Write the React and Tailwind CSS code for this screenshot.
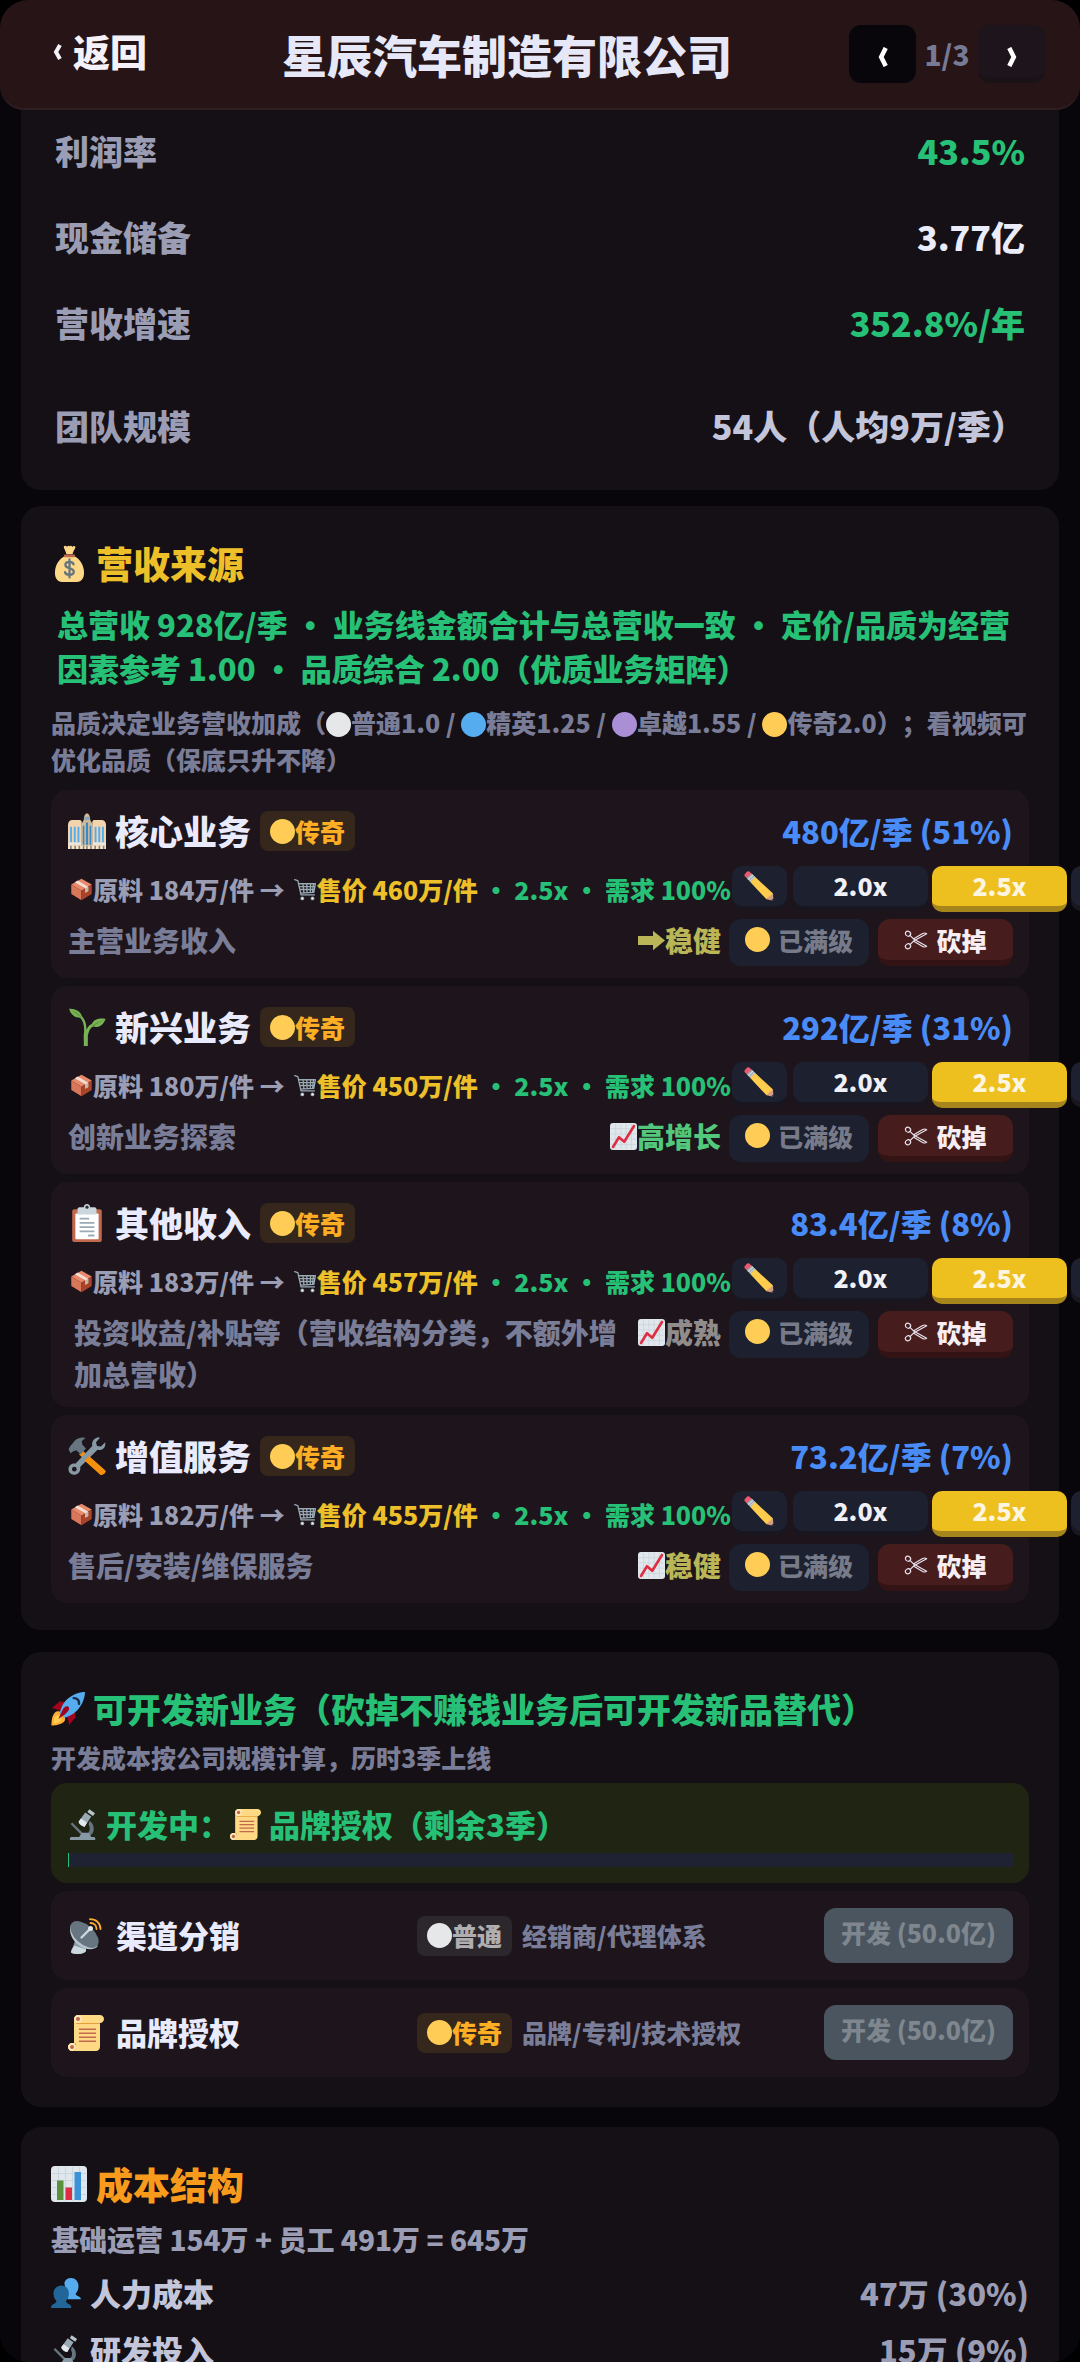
import React from 'react';
import clsx from 'clsx';

// Every icon is drawn on a 36x36 grid
function Icon({ className, children }) {
  return (
    <svg viewBox="0 0 36 36" className={clsx('inline-block shrink-0', className)} aria-hidden="true">
      {children}
    </svg>
  );
}

const MoneyBag = ({ className }) => (
  <Icon className={className}>
    <path fill="#FDD888" d="M31.9 23.8c-.9-5.300-3.900-9.800-8.300-12.400-1.400-.8-2.600-.4-3.500-1.200h-4.200c-.9.8-2.100.4-3.500 1.200-4.400 2.600-7.400 7.100-8.300 12.400-1.100 6.500 1.100 12.200 6.900 12.200h14c5.800 0 8-5.700 6.900-12.200z" />
    <path fill="#FDD888" d="M12.500 1.500c1-1.400 2.200-.3 3 .1 1-.9 1.900-1.400 2.700-.4.9-1 1.800-.5 2.500.4 1-.6 2.400-1.200 3 0 .5 1.300-2.200 4.100-2.700 7.400h-6c-.5-3.300-3-6.200-2.500-7.500z" />
    <path fill="#BF6952" d="M23.500 10.500c0 .8-.6 1.300-1.300 1.300h-8.400c-.7 0-1.300-.5-1.300-1.300s.6-1.300 1.300-1.300h8.400c.7 0 1.300.500 1.300 1.300z" />
    <path fill="none" stroke="#67757F" strokeWidth="2.200" strokeLinecap="round" d="M22 18.800c-.5-1.500-2-2.300-4-2.300-2.300 0-4 1.100-4 3 0 4.300 8.200 2 8.200 6.300 0 2-1.800 3.200-4.200 3.200-2.300 0-4-.9-4.400-2.600M18 14v17.500" />
  </Icon>
);

const Building = ({ className }) => (
  <Icon className={className}>
    <path fill="#F2D5AE" d="M0 12c0-3 2-4.500 4-4.500h7c1.500 0 2 1 2 2V35H0zM23 9.500c0-1 .5-2 2-2h7c2 0 4 1.500 4 4.500v23H23z" />
    <path fill="#CDBB9C" d="M12.500 12c.5-2 2-3 2.500-5 .3-3 1-5.500 3-5.500s2.700 2.500 3 5.500c.5 2 2 3 2.500 5v23h-11z" />
    <path fill="#8EA3B0" d="M15.500 4.500h5v3h-5z" />
    <path fill="#55ACEE" d="M2 14h1.800v15H2zM5.500 14h1.800v15H5.500zM9 14h1.800v15H9zM25.200 14H27v15h-1.800zM28.700 14h1.800v15h-1.800zM32.200 14H34v15h-1.800z" />
    <path fill="#3B88C3" d="M14 13h1.500v18H14zM17 10h2v21h-2zM20.500 13H22v18h-1.500z" />
    <path fill="#E6E7E8" d="M0 29h12.500v2H0zM23.500 29H36v2H23.500z" />
    <path fill="#F5E6CC" d="M0 32h36v3H0z" />
    <path fill="#8A7F77" d="M2 32h1.500v3H2zM6 32h1.500v3H6zM10 32h1.500v3H10zM14 32h1.500v3H14zM17.200 32h1.500v3h-1.500zM21 32h1.500v3H21zM25 32h1.500v3H25zM29 32h1.500v3H29zM33 32h1.500v3H33z" />
  </Icon>
);

const Seedling = ({ className }) => (
  <Icon className={className}>
    <path fill="#77B255" d="M22.500 15.200c-1.900.8-3.800 2.800-5 5.300.2-5-1.300-9.600-4.300-12.700C12 3 6 .3 1.200.8c.2 1.500.8 3 1.800 4.100C5.300 8 8 9.300 11.500 9.200c3.200 3.500 4.500 8.600 3.400 16.400L15 36h3.800V26c.8-3.900 2.500-7.300 5-8.400 4.800 1.600 9.400-1 11.900-7.200-5.700-1.200-11.200.3-13.200 4.800z" />
    <path fill="#5C913B" d="M2.500 1.800c4 1.300 7.500 3.200 9.900 6.300l-.6.7C9 6 6 4 2.500 1.800zM34 11.500c-4 1-7.500 2.500-10.500 5l.4.900c3-2.500 6.500-4.400 10.100-5.900z" />
  </Icon>
);

const Clipboard = ({ className }) => (
  <Icon className={className}>
    <path fill="#C1694F" d="M32 34c0 1.100-.9 2-2 2H6c-1.100 0-2-.9-2-2V7c0-1.100.9-2 2-2h24c1.100 0 2 .9 2 2z" />
    <path fill="#FFF" d="M29 32.500c0 .6-.4 1-1 1H8c-.6 0-1-.4-1-1V10c0-.6.400-1 1-1h20c.6 0 1 .400 1 1z" />
    <path fill="#CCD6DD" d="M25 3h-4c0-1.700-1.300-3-3-3s-3 1.300-3 3h-4c-1.100 0-2 .9-2 2v5h18V5c0-1.100-.9-2-2-2z" />
    <circle cx="18" cy="3" r="1.500" fill="#292F33" />
    <path fill="#99AAB5" d="M11 13h9v1.800h-9zM11 17h14v1.800H11zM11 21h14v1.800H11zM11 25h14v1.800H11zM19 29h6v1.800h-6z" />
  </Icon>
);

const Tools = ({ className }) => (
  <Icon className={className}>
    <path fill="#F4900C" d="M14 13l21 18.500c1.500 2-.9 4.500-4 4.500L10.500 16.500z" />
    <path fill="#66757F" d="M.5 11.500l2-3.500C5 6.500 5 3.500 9.500 1.500c2.500-1 5.500-1.500 7-.5L13 4l.5 3 3.500 4-5 5.500-4-4-3 1-2.500 2z" />
    <path fill="#8899A6" d="M28 12l-16.500 16.500c.8 3.500-1.500 7-5 7.300C3 36 0 33.500.5 29.800c.4-3 3.500-5 6.500-4.500L23 8.500c-1-3.500 1.500-7.500 5.500-8.300l1.800.5L26.500 5l1 3.500 3.700.5 4-4c1 4.500-2.500 8.300-7.200 7z" />
    <path fill="#F4900C" d="M20 18.300L35 31.500c1.500 2-.9 4.500-4 4.500L15.500 22.300z" />
    <circle cx="6" cy="30.500" r="2.200" fill="#1d151b" />
  </Icon>
);

const Parcel = ({ className }) => (
  <Icon className={className}>
    <path fill="#E8896A" d="M2 10L18 1l16 9-16 10z" />
    <path fill="#D9775A" d="M2 10l16 10v15L2 25z" />
    <path fill="#A8442A" d="M34 10L18 20v15l16-10z" />
    <path fill="#F2DDD5" d="M7.500 6.500L12 4l16.500 9.500v7l-4.500 2.500v-7z" />
    <path fill="#C9B4B0" d="M24 16l4.500-2.500v7L24 23z" />
  </Icon>
);

const Cart = ({ className }) => (
  <Icon className={className}>
    <path fill="none" stroke="#99AAB5" strokeWidth="2" strokeLinecap="round" strokeLinejoin="round" d="M1 2.500l5 1.500 5 22.500h21M7.500 9h26l-2.500 13.500-20.500 1M8.500 13.500h24.300M9.500 18h22.300M14 9l1.500 14M20 9l.5 14M26 9l-.5 14M30.500 9l-1.500 13.500" />
    <circle cx="13" cy="32" r="3" fill="#99AAB5" />
    <circle cx="29" cy="32" r="3" fill="#99AAB5" />
    <circle cx="13" cy="32" r="1.300" fill="#FFF" />
    <circle cx="29" cy="32" r="1.300" fill="#FFF" />
  </Icon>
);

const Pencil = ({ className }) => (
  <Icon className={className}>
    <path fill="#D99E82" d="M35.200 33.600L34.800 27l-4.800-2-5 4.500 2 4.500 6.600 1.500c1.200.2 1.700-.7 1.600-1.900z" />
    <path fill="#EA596E" d="M7.600 1.700C5.500-.3 4.500-.1 2.400 2 .2 4.200-.2 5.300 1.900 7.300l3 3 6-5.500z" />
    <path fill="#99AAB5" d="M3.200 8.800l6-5.800 4.500 4.500-6 5.800z" />
    <path fill="#CCD6DD" d="M4.500 10l6-5.700 1 1-6 5.700zM6.500 12l6-5.700 1 1-6 5.700z" />
    <path fill="#FFCC4D" d="M7.500 13.200l6-5.900L34.800 27c-1.500.5-2 .8-2.300 2.300-1.500-.2-2.600.7-2.700 2.200-1.500-.1-2.300 1-2.800 2.500z" />
    <path fill="#292F33" d="M35.500 35.500c.6-.6.200-2 .1-2.900L32.500 35c1 .2 2.400 1.100 3 .5z" />
  </Icon>
);

const Scissors = ({ className }) => (
  <Icon className={className}>
    <g fill="none" stroke="#e8e4ee" strokeWidth="1.800" strokeLinejoin="round">
      <ellipse cx="6" cy="8.500" rx="4" ry="3.600" transform="rotate(35 6 8.500)" />
      <ellipse cx="6" cy="27.500" rx="4" ry="3.600" transform="rotate(-35 6 27.500)" />
      <path d="M9 11l6 6 19 10.500c-2 1.500-4 1.200-6 .2L14 19.500M9 25l6-6L34 8.500c-2-1.500-4-1.200-6-.2L14 16.500" />
    </g>
  </Icon>
);

const ArrowRight = ({ className }) => (
  <Icon className={className}>
    <path fill="currentColor" d="M0 12h20V5l16 13-16 13v-7H0z" />
  </Icon>
);

const ChartUp = ({ className }) => (
  <Icon className={className}>
    <rect width="36" height="36" rx="4" fill="#E1E8ED" />
    <path fill="none" stroke="#CCD6DD" strokeWidth="1.200" d="M7.500 1v34M14.500 1v34M21.500 1v34M28.500 1v34M1 7.500h34M1 14.500h34M1 21.500h34M1 28.500h34" />
    <path fill="none" stroke="#DD2E44" strokeWidth="3.500" strokeLinecap="round" strokeLinejoin="round" d="M4 32l8-13 7 6L32 4" />
  </Icon>
);

const Rocket = ({ className }) => (
  <Icon className={className}>
    <path fill="#A0041E" d="M1 17l8-7 16 1 1 16-7 8s.2-5-3-9-7-7-15-9z" />
    <path fill="#FFAC33" d="M.500 35.500s-.5-9.500 3.500-13.500 11 0 11 6.500-14.500 7-14.500 7z" />
    <path fill="#FFCC4D" d="M3 33.500s-.5-5.500 2-8 6 .5 6 3.500-8 4.500-8 4.500z" />
    <path fill="#55ACEE" d="M36 0s-10 0-18 7c-6 5-7.500 11-9 16 2 0 4.500 3 4.500 4.500 5-1.500 10.500-3.500 15.500-9.500C36 10 36 0 36 0z" />
    <path fill="#A0041E" d="M8 28.500s4-10 6-12 4-2 5 0-1 4-3 6-8 6-8 6z" />
    <path fill="none" stroke="#1C2B45" strokeWidth="2.600" strokeLinecap="round" d="M24 6.500c3.500-.3 6.200 2.300 5.700 6" />
  </Icon>
);

const Microscope = ({ className }) => (
  <Icon className={className}>
    <path fill="#66757F" d="M3 17.500l2-1.800 12 11.800-2.200 2z" />
    <path fill="#66757F" d="M25 13.500c5 3.500 6.500 10 3 15.500l-5 4-3.500-3.500c5-1 7.500-6 4.500-11.500z" />
    <path fill="#8899A6" d="M3 36c-1 0-1.500-3 1-3.500h9l3-5h8l3 5h3c2.500.5 2 3.500 1 3.500z" />
    <path fill="#99AAB5" d="M12.500 14.500L20 4l7 4.800-7.500 11.500c-1 1.300-8-3.500-7-5.800z" />
    <path fill="#E1E8ED" d="M12.500 14.500L15 11l7 5-2.500 4.300c-1 1.300-8-3.500-7-5.800z" />
    <path fill="#B8C5CE" d="M22.500 3.500l2.300-3.200 6.500 4.500L29 8z" />
  </Icon>
);

const Scroll = ({ className }) => (
  <Icon className={className}>
    <path fill="#FFD983" d="M32 0H10C7.800 0 6 1.800 6 4v24H4c-2.200 0-4 1.800-4 4s1.800 4 4 4h24c2.200 0 4-1.800 4-4V8c2.200 0 4-1.800 4-4s-1.800-4-4-4z" />
    <path fill="#E39F3D" d="M8 8h24v.9H8zM8 28v4c0 1.700-1 3.300-2.500 4H4c2-.5 3-2 3-4 0-1-.3-2-1-3z" />
    <path fill="#FFE8B6" d="M10 0c2.200 0 4 1.800 4 4s-1.800 4-4 4-4-1.800-4-4 1.800-4 4-4zM4 28c2.200 0 4 1.800 4 4s-1.800 4-4 4-4-1.800-4-4 1.800-4 4-4z" />
    <circle cx="10" cy="4" r="2" fill="#C1694F" />
    <circle cx="4" cy="32" r="2" fill="#C1694F" />
    <path fill="#C1694F" d="M11 13.500h17v1.500H11zM11 17.500h17V19H11zM11 21.500h17V23H11zM11 25.500h17V27H11z" />
  </Icon>
);

const Dish = ({ className }) => (
  <Icon className={className}>
    <path fill="#8899A6" d="M7 20l11 5 0 8c-2 3.500-12 4-15 1.500 0-4 4-7 4-14.500z" />
    <path fill="#CCD6DD" d="M3 34.500c0-2.500 2-4.500 3.500-7 4 1 8 3 11.500 3.500v2c-2 3.500-12 4-15 1.500z" />
    <path fill="#B8C5CE" d="M3.500 6C-.5 13 4 23 12 28c7 4.500 14 4 17.500.5C31 25 4 4 3.500 6z" />
    <ellipse cx="16.500" cy="16.500" rx="17" ry="9.500" fill="#66757F" transform="rotate(42 16.500 16.500)" />
    <path fill="none" stroke="#CCD6DD" strokeWidth="2.400" strokeLinecap="round" d="M13.500 19.500L22 11" />
    <circle cx="22.500" cy="10.500" r="2.500" fill="#E1E8ED" />
    <path fill="none" stroke="#FFAC33" strokeWidth="1.800" strokeLinecap="round" d="M22.500 5c3.500 0 6 2.500 6 6M22 1.200C28 1.200 32.500 5 32.500 11" />
  </Icon>
);

const BarChart = ({ className }) => (
  <Icon className={className}>
    <rect width="36" height="36" rx="4" fill="#E1E8ED" />
    <path fill="none" stroke="#CCD6DD" strokeWidth="1.200" d="M7.500 1v34M14.500 1v34M21.500 1v34M28.500 1v34M1 7.500h34M1 14.500h34M1 21.500h34M1 28.500h34" />
    <path fill="#5C913B" d="M6 14.500h6.500V34H6z" />
    <path fill="#DD2E44" d="M14.500 21.500H21V34h-6.500z" />
    <path fill="#3B94D9" d="M23.500 6H30v28h-6.500z" />
  </Icon>
);

const People = ({ className }) => (
  <Icon className={className}>
    <path fill="#55ACEE" d="M24 0c5 0 9 4 9 9.500 0 4-1.500 7.500-3.500 9.500 0 3 6.500 3 6.500 6.500H20L16 6c1-4 4-6 8-6z" />
    <path fill="#226699" d="M12.500 9c5 0 9 4 9 9.500 0 4-1.500 7-3.500 9 0 4 6.500 2.500 6.500 8.500H0c0-6 6.500-4.500 6.500-8.500-2-2-3.500-5-3.500-9C3 13 7.500 9 12.500 9z" />
  </Icon>
);

// Round quality marker, as tall as the text next to it
const Dot = ({ className }) => (
  <Icon className={clsx('size-[25px]', className)}>
    <circle cx="18" cy="18" r="18" fill="currentColor" />
  </Icon>
);

const metrics = [
  { label: '利润率', value: '43.5%', color: 'text-[#27c077]' },
  { label: '现金储备', value: '3.77亿', color: 'text-[#eaecfa]' },
  { label: '营收增速', value: '352.8%/年', color: 'text-[#27c077]' },
];

const businesses = [
  { name: '核心业务', icon: Building, amount: '480亿/季 (51%)', cost: '184万/件', price: '460万/件', desc: '主营业务收入', trend: '稳健', trendIcon: ArrowRight, trendColor: 'text-[#bab556]' },
  { name: '新兴业务', icon: Seedling, amount: '292亿/季 (31%)', cost: '180万/件', price: '450万/件', desc: '创新业务探索', trend: '高增长', trendIcon: ChartUp, trendColor: 'text-[#53c77c]' },
  { name: '其他收入', icon: Clipboard, amount: '83.4亿/季 (8%)', cost: '183万/件', price: '457万/件', desc: '投资收益/补贴等（营收结构分类，不额外增加总营收）', long: true, trend: '成熟', trendIcon: ChartUp, trendColor: 'text-[#908c8c]' },
  { name: '增值服务', icon: Tools, amount: '73.2亿/季 (7%)', cost: '182万/件', price: '455万/件', desc: '售后/安装/维保服务', trend: '稳健', trendIcon: ChartUp, trendColor: 'text-[#bab556]' },
];

const candidates = [
  { name: '渠道分销', icon: Dish, quality: 'normal', desc: '经销商/代理体系', cost: '开发 (50.0亿)' },
  { name: '品牌授权', icon: Scroll, quality: 'legend', desc: '品牌/专利/技术授权', cost: '开发 (50.0亿)' },
];

const costs = [
  { name: '人力成本', icon: People, value: '47万 (30%)' },
  { name: '研发投入', icon: Microscope, value: '15万 (9%)' },
];

function QualityBadge({ quality }) {
  const legend = quality === 'legend';
  return (
    <span
      className={clsx(
        'flex h-10 shrink-0 items-center rounded-lg px-[10px] text-[25px] leading-none',
        legend ? 'bg-[#35271b] text-[#fdae25]' : 'bg-[#2c272d] text-[#b0aeb0]'
      )}
    >
      <Dot className={legend ? 'text-[#ffcc55]' : 'text-[#e6e7e8]'} />
      {legend ? '传奇' : '普通'}
    </span>
  );
}

function Card({ className, children }) {
  return <section className={clsx('mx-[21px] rounded-[20px] bg-[#151015] px-[30px]', className)}>{children}</section>;
}

function BusinessCard({ item }) {
  const BizIcon = item.icon;
  const TrendIcon = item.trendIcon;
  return (
    <article className="rounded-2xl bg-[#1d151b] pt-4 pr-4 pb-3 pl-[17px]">
      <div className="flex h-[50px] items-center">
        <BizIcon className="size-[38px]" />
        <h3 className="ml-[9px] mr-[9px] text-[34px] leading-[50px] text-[#e9eafb]">{item.name}</h3>
        <QualityBadge quality="legend" />
        <span className="ml-auto text-[31px] leading-[50px] text-[#4a8cf7]">{item.amount}</span>
      </div>

      <div className="mt-[10px] flex h-[46px] items-start whitespace-nowrap text-[25px] leading-[46px]">
        <div className="flex shrink-0 items-center pl-[2px] text-[#9a9db4]">
          <Parcel className="size-[23px]" />
          <span>原料 {item.cost} → </span>
          <Cart className="ml-[9px] size-[23px]" />
          <span className="text-[#edc02a]">售价 {item.price}</span>
          <span className="text-[#27c077]">&nbsp;•&nbsp;2.5x&nbsp;•&nbsp;需求 100%</span>
        </div>
        <button type="button" aria-label="编辑定价" className="ml-px flex h-10 w-[55px] shrink-0 items-center justify-center rounded-[10px] bg-[#1d202e] shadow-[0_5px_0_#1a1620]">
          <Pencil className="size-[30px]" />
        </button>
        <button type="button" className="ml-[6px] h-10 w-[135px] shrink-0 rounded-[10px] bg-[#1d202e] leading-[38px] text-[#f0f0f6] shadow-[0_5px_0_#1a1620]">
          <span className="block h-10">2.0x</span>
        </button>
        <button type="button" className="ml-1 h-[46px] w-[135px] shrink-0 rounded-[10px] border-b-6 border-[#a6851c] bg-[#eec01f] leading-[38px] text-[#fbf5e2]">
          <span className="block h-10">2.5x</span>
        </button>
        <button type="button" aria-label="提高倍率" className="ml-1 h-10 w-[135px] shrink-0 rounded-[10px] bg-[#1d202e] shadow-[0_5px_0_#1a1620]" />
      </div>

      <div className="mt-[7px] flex items-start text-[28px] leading-[42px]">
        <p className={clsx('min-w-0 flex-1 text-[#7a7d97]', item.long && 'px-[6px]')}>{item.desc}</p>
        <span className={clsx('ml-2 flex shrink-0 items-center', item.trendColor)}>
          <TrendIcon className="size-[27px]" />
          {item.trend}
        </span>
        <button type="button" disabled className="ml-2 flex h-[47px] w-[140px] shrink-0 items-center justify-center gap-2 rounded-xl bg-[#1d202e] pb-[6px] text-[25px] text-[#777a88]">
          <Dot className="text-[#ffcc55]" />
          已满级
        </button>
        <button type="button" className="ml-[9px] flex h-[47px] w-[135px] shrink-0 items-center justify-center gap-2 rounded-xl border-b-6 border-[#341314] bg-[#471c1c] text-[25px] text-[#f6eef2]">
          <Scissors className="size-6" />
          砍掉
        </button>
      </div>
    </article>
  );
}

function CandidateRow({ item }) {
  const RowIcon = item.icon;
  return (
    <div className="flex h-[89px] items-center rounded-2xl bg-[#1d151b] pr-4 pl-[17px]">
      <RowIcon className="size-9" />
      <h3 className="ml-3 w-[301px] text-[31px] text-[#e9eafb]">{item.name}</h3>
      <QualityBadge quality={item.quality} />
      <span className="ml-[10px] text-[25px] text-[#7a7d97]">{item.desc}</span>
      <button type="button" disabled className="ml-auto h-[55px] w-[189px] rounded-xl bg-[#4a555f] pb-[6px] text-[25px] text-[#7f868e]">
        {item.cost}
      </button>
    </div>
  );
}

function Header() {
  return (
    <header className="relative flex h-[110px] items-center rounded-[24px] border-b-2 border-[#2f1f23] bg-[#271416] pl-[52px] pr-[35px]">
      <button type="button" className="flex items-center pb-[5px] text-[37px] leading-none text-[#f4f2f8]">
        <svg viewBox="0 0 10 16" className="mr-[11px] h-4 w-[10px]" aria-hidden="true">
          <path fill="none" stroke="currentColor" strokeWidth="4" d="M8 1L4 8l4 7" />
        </svg>
        返回
      </button>
      <h1 className="absolute inset-x-[200px] pr-[66px] text-center text-[45px] leading-none text-[#e6e8f8]">星辰汽车制造有限公司</h1>
      <nav className="ml-auto flex items-center text-[28px] text-[#777a94]">
        <button type="button" aria-label="上一家" className="flex h-[58px] w-[67px] items-center justify-center rounded-xl bg-[#08060b] pt-[6px]">
          <svg viewBox="0 0 12 22" className="h-5 w-3" aria-hidden="true">
            <path fill="none" stroke="#fff" strokeWidth="5" d="M9 1L4 11l5 10" />
          </svg>
        </button>
        <span className="w-[62px] text-center leading-none">1/3</span>
        <button type="button" aria-label="下一家" className="flex h-[58px] w-[67px] items-center justify-center rounded-xl border-b-6 border-[#1b1218] bg-[#1d151b] pt-3">
          <svg viewBox="0 0 12 22" className="h-5 w-3" aria-hidden="true">
            <path fill="none" stroke="#fff" strokeWidth="5" d="M3 1l5 10-5 10" />
          </svg>
        </button>
      </nav>
    </header>
  );
}

export default function App() {
  return (
    <div className="h-screen overflow-hidden bg-black">
      <div className="h-full overflow-hidden rounded-[28px] bg-[#08060b] font-['Noto_Sans_CJK_SC',sans-serif] font-black [text-spacing-trim:space-all]">
        <Header />

        <Card className="rounded-t-none pb-[22px] text-[34px]">
          <dl className="-mt-[3px] px-1">
            {metrics.map((m) => (
              <div key={m.label} className="flex h-[86px] items-center justify-between">
                <dt className="text-[#9a9db4]">{m.label}</dt>
                <dd className={m.color}>{m.value}</dd>
              </div>
            ))}
            <div className="mt-[17px] flex h-[86px] items-center justify-between">
              <dt className="text-[#9a9db4]">团队规模</dt>
              <dd className="text-[#c3c6da]">54人（人均9万/季）</dd>
            </div>
          </dl>
        </Card>

        <Card className="mt-4 pt-8 pb-[27px]">
          <h2 className="flex h-[50px] items-center gap-2 text-[37px] leading-[50px] text-[#edc02a]">
            <MoneyBag className="size-[37px]" />
            营收来源
          </h2>
          <p className="mt-[14px] px-[6px] text-[31px] leading-[44px] text-[#27c077]">
            总营收 928亿/季 • 业务线金额合计与总营收一致 • 定价/品质为经营因素参考 1.00 • 品质综合 2.00（优质业务矩阵）
          </p>
          <p className="mt-[14px] text-[25px] leading-[37px] text-[#7a7d97]">
            品质决定业务营收加成（<Dot className="-mt-1 text-[#e6e7e8]" />普通1.0 / <Dot className="-mt-1 text-[#55acee]" />精英1.25 /{' '}
            <Dot className="-mt-1 text-[#aa8ed6]" />卓越1.55 / <Dot className="-mt-1 text-[#ffcc55]" />传奇2.0）；看视频可优化品质（保底只升不降）
          </p>
          <div className="mt-3 flex flex-col gap-2">
            {businesses.map((item) => (
              <BusinessCard key={item.name} item={item} />
            ))}
          </div>
        </Card>

        <Card className="mt-[22px] pt-8 pb-[30px]">
          <h2 className="flex h-[50px] items-center gap-2 text-[34px] leading-[50px] text-[#27c077]">
            <Rocket className="size-[34px]" />
            可开发新业务（砍掉不赚钱业务后可开发新品替代）
          </h2>
          <p className="mt-[5px] text-[25px] leading-[37px] text-[#7a7d97]">开发成本按公司规模计算，历时3季上线</p>
          <div className="mt-[7px] flex flex-col gap-2">
            <div className="rounded-2xl bg-[#202413] pt-[19px] pr-4 pb-4 pl-[17px]">
              <p className="flex h-[44px] items-center text-[31px] leading-[44px] text-[#27c077]">
                <Microscope className="mr-[7px] size-[31px]" />
                开发中：
                <Scroll className="mr-2 size-[31px]" />
                品牌授权（剩余3季）
              </p>
              <div role="progressbar" aria-label="开发进度" aria-valuenow={0} className="mt-[7px] h-[14px] bg-[#1e2233]">
                <div className="h-full w-px bg-[#27c077]" />
              </div>
            </div>
            {candidates.map((item) => (
              <CandidateRow key={item.name} item={item} />
            ))}
          </div>
        </Card>

        <Card className="mt-5 pt-8 pb-8">
          <h2 className="flex h-[50px] items-center gap-[9px] text-[37px] leading-[50px] text-[#f89a1c]">
            <BarChart className="size-[36px]" />
            成本结构
          </h2>
          <p className="mt-[9px] text-[28px] leading-[42px] text-[#9a9db4]">基础运营 154万 + 员工 491万 = 645万</p>
          <ul className="mt-1 text-[31px] leading-[57px]">
            {costs.map((c) => {
              const CostIcon = c.icon;
              return (
                <li key={c.name} className="flex h-[57px] items-center text-[#c3c6da]">
                  <CostIcon className="mr-[9px] size-[30px]" />
                  {c.name}
                  <span className="ml-auto text-[#9a9db4]">{c.value}</span>
                </li>
              );
            })}
          </ul>
        </Card>
      </div>
    </div>
  );
}
